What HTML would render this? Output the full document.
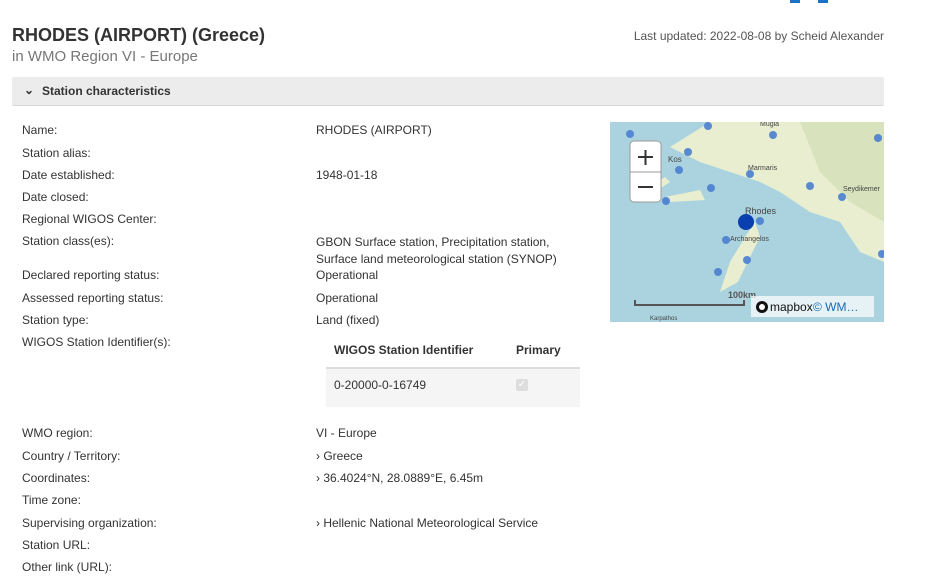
<!DOCTYPE html>
<html><head><meta charset="utf-8"><style>
body{margin:0;width:939px;height:579px;overflow:hidden;background:#fff;font-family:"Liberation Sans",sans-serif;color:#333;position:relative}
.a{position:absolute;white-space:nowrap}
.l{left:22px;font-size:12px;color:#333}
.v{left:316px;font-size:12px;color:#333}
</style></head><body>
<div class="a" style="left:790px;top:0;width:10px;height:3px;background:#1a73c8"></div>
<div class="a" style="left:818px;top:0;width:10px;height:3px;background:#1a73c8"></div>
<div class="a" style="left:12px;top:25px;font-size:18px;font-weight:bold;color:#333">RHODES (AIRPORT) (Greece)</div>
<div class="a" style="left:12px;top:48px;font-size:15px;color:#777">in WMO Region VI - Europe</div>
<div class="a" style="right:55px;top:29px;font-size:12px;color:#555">Last updated: 2022-08-08 by Scheid Alexander</div>
<div class="a" style="left:12px;top:77px;width:872px;height:28px;background:#ececec;border-bottom:1px solid #d8d8d8;border-radius:2px"></div>
<div class="a" style="left:24px;top:83px;font-size:12px;font-weight:bold;color:#333">⌄</div>
<div class="a" style="left:42px;top:84px;font-size:12px;font-weight:bold;color:#333">Station characteristics</div>

<div class="a l" style="top:123px">Name:</div><div class="a v" style="top:123px">RHODES (AIRPORT)</div>
<div class="a l" style="top:146px">Station alias:</div>
<div class="a l" style="top:168px">Date established:</div><div class="a v" style="top:168px">1948-01-18</div>
<div class="a l" style="top:190px">Date closed:</div>
<div class="a l" style="top:212px">Regional WIGOS Center:</div>
<div class="a l" style="top:234px">Station class(es):</div><div class="a v" style="top:234px;line-height:17px">GBON Surface station, Precipitation station,<br>Surface land meteorological station (SYNOP)</div>
<div class="a l" style="top:268px">Declared reporting status:</div><div class="a v" style="top:268px">Operational</div>
<div class="a l" style="top:291px">Assessed reporting status:</div><div class="a v" style="top:291px">Operational</div>
<div class="a l" style="top:313px">Station type:</div><div class="a v" style="top:313px">Land (fixed)</div>
<div class="a l" style="top:335px">WIGOS Station Identifier(s):</div>
<div class="a" style="left:334px;top:343px;font-size:12px;font-weight:bold">WIGOS Station Identifier</div>
<div class="a" style="left:516px;top:343px;font-size:12px;font-weight:bold">Primary</div>
<div class="a" style="left:326px;top:367px;width:254px;height:38px;background:#f5f5f5;border-top:2px solid #ddd"></div>
<div class="a" style="left:334px;top:378px;font-size:12px">0-20000-0-16749</div>
<div class="a" style="left:516px;top:379px;width:12px;height:12px;background:#ddd;border-radius:2px;color:#fff;font-size:10px;text-align:center;line-height:12px">✓</div>
<div class="a l" style="top:426px">WMO region:</div><div class="a v" style="top:426px">VI - Europe</div>
<div class="a l" style="top:449px">Country / Territory:</div><div class="a v" style="top:449px">› Greece</div>
<div class="a l" style="top:471px">Coordinates:</div><div class="a v" style="top:471px">› 36.4024°N, 28.0889°E, 6.45m</div>
<div class="a l" style="top:493px">Time zone:</div>
<div class="a l" style="top:516px">Supervising organization:</div><div class="a v" style="top:516px">› Hellenic National Meteorological Service</div>
<div class="a l" style="top:538px">Station URL:</div>
<div class="a l" style="top:560px">Other link (URL):</div>

<svg class="a" style="left:610px;top:122px" width="274" height="200" viewBox="0 0 274 200">
<rect width="274" height="200" fill="#aad3df"/>
<path d="M60 25 L100 0 L274 0 L274 140 L250 130 L230 100 L200 90 L170 70 L150 60 L120 50 L90 40 Z" fill="#e8eecf"/>
<path d="M190 0 L274 0 L274 100 L240 80 L210 50 Z" fill="#d8e2bd"/>
<path d="M110 170 L120 140 L135 115 L145 100 L150 115 L140 135 L128 160 Z" fill="#e8eecf"/>
<path d="M55 75 L90 68 L95 78 L60 80 Z" fill="#e8eecf"/>
<path d="M40 65 L55 55 L60 60 L45 70 Z" fill="#e8eecf"/>
<g fill="#4a7fd0" opacity="0.9">
<circle cx="20" cy="12" r="4"/><circle cx="98" cy="4" r="4"/><circle cx="163" cy="13" r="4"/><circle cx="268" cy="16" r="4"/>
<circle cx="78" cy="30" r="4"/><circle cx="69" cy="48" r="4"/><circle cx="140" cy="52" r="4"/><circle cx="101" cy="66" r="4"/>
<circle cx="200" cy="64" r="4"/><circle cx="232" cy="75" r="4"/><circle cx="56" cy="79" r="4"/><circle cx="150" cy="99" r="4"/>
<circle cx="116" cy="118" r="4"/><circle cx="137" cy="138" r="4"/><circle cx="108" cy="150" r="4"/><circle cx="272" cy="132" r="4"/>
</g>
<circle cx="136" cy="100" r="8" fill="#0a3fb0"/>
<g font-family="Liberation Sans,sans-serif" font-size="8" fill="#444">
<text x="58" y="40">Kos</text><text x="138" y="48" font-size="7">Marmaris</text><text x="135" y="92" font-size="9">Rhodes</text>
<text x="120" y="119" font-size="7">Archangelos</text><text x="233" y="69" font-size="7">Seydikemer</text><text x="150" y="4" font-size="7">Muğla</text>
<text x="40" y="198" font-size="6">Karpathos</text></g>
<rect x="20" y="19" width="31" height="61" rx="4" fill="#fff" stroke="#999"/>
<line x1="20" y1="50" x2="51" y2="50" stroke="#999"/>
<path d="M28 35h15M35.5 28v15M28 65h15" stroke="#333" stroke-width="2"/>
<path d="M25 178v5h109v-5" stroke="#555" stroke-width="2" fill="none"/>
<text x="118" y="176" font-family="Liberation Sans,sans-serif" font-size="9" font-weight="bold" fill="#555">100km</text>
<rect x="141" y="174" width="123" height="21" fill="#fff" opacity="0.7"/>
<circle cx="152" cy="185" r="6" fill="#111"/><circle cx="152" cy="185" r="3" fill="#fff"/>
<text x="160" y="189" font-family="Liberation Sans,sans-serif" font-size="12" fill="#111">mapbox</text>
<text x="203" y="189" font-family="Liberation Sans,sans-serif" font-size="12" fill="#1a6bb0">© WM…</text>
</svg>
</body></html>
